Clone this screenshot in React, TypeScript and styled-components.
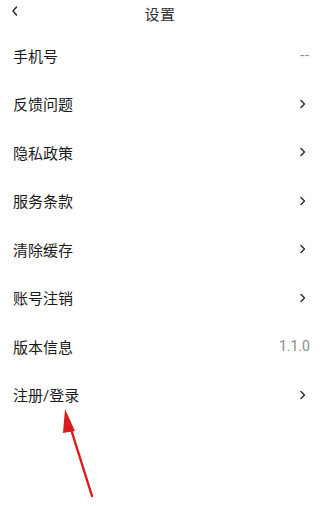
import React from 'react';
import styled, { createGlobalStyle } from 'styled-components';

const GlobalStyle = createGlobalStyle`
  html, body {
    margin: 0;
    padding: 0;
    background: #fff;
  }
  body {
    font-family: Roboto, "Noto Sans CJK SC", "Noto Sans", sans-serif;
    color: #1c1c1c;
  }
`;

const Page = styled.div`
  position: relative;
  width: 320px;
  height: 506px;
  overflow: hidden;
  background: #fff;
`;

const Header = styled.div`
  display: flex;
  align-items: center;
  justify-content: center;
  position: relative;
  height: 26px;
  margin-bottom: 5px;

  .back {
    position: absolute;
    left: 10px;
    top: 5px;
    width: 10px;
    height: 12px;
  }

  .title {
    font-size: 15px;
    color: #333;
    letter-spacing: 0.5px;
  }
`;

const List = styled.div`
  display: flex;
  flex-direction: column;
`;

const Row = styled.div`
  display: flex;
  align-items: center;
  justify-content: space-between;
  height: 48.5px;
  padding: 0 10px 0 13px;

  .label {
    font-size: 15px;
    color: #1a1a1a;
  }
`;

const Value = styled.span<{ $spaced?: boolean }>`
  font-size: 14px;
  color: #8a8a8a;
  letter-spacing: ${(p) => (p.$spaced ? '1px' : '0')};
`;

const Chevron = styled.svg`
  width: 8px;
  height: 10px;
  margin-right: 3px;
`;

const Arrow = styled.svg`
  position: absolute;
  left: 0;
  top: 0;
  width: 320px;
  height: 506px;
  pointer-events: none;
`;

type Item = { label: string; value?: string };

const items: Item[] = [
  { label: '手机号', value: '--' },
  { label: '反馈问题' },
  { label: '隐私政策' },
  { label: '服务条款' },
  { label: '清除缓存' },
  { label: '账号注销' },
  { label: '版本信息', value: '1.1.0' },
  { label: '注册/登录' },
];

const App: React.FC = () => {
  return (
    <Page>
      <GlobalStyle />
      <Header>
        <svg className="back" viewBox="0 0 10 12">
          <path d="M6.5 2 L3 6 L6.5 10" fill="none" stroke="#222" strokeWidth="1.4" strokeLinecap="round" strokeLinejoin="round" />
        </svg>
        <span className="title">设置</span>
      </Header>
      <List>
        {items.map((it) => (
          <Row key={it.label}>
            <span className="label">{it.label}</span>
            {it.value ? (
              <Value $spaced={it.value === '--'}>{it.value}</Value>
            ) : (
              <Chevron viewBox="0 0 8 10">
                <path d="M2 1.5 L5.5 5 L2 8.5" fill="none" stroke="#1e2a3a" strokeWidth="1.4" strokeLinecap="round" strokeLinejoin="round" />
              </Chevron>
            )}
          </Row>
        ))}
      </List>
      <Arrow viewBox="0 0 320 506">
        <line x1="92" y1="496" x2="70" y2="426" stroke="#d91c1c" strokeWidth="2.4" strokeLinecap="round" />
        <polygon points="65,409 75,431 63,433" fill="#d91c1c" />
      </Arrow>
    </Page>
  );
};

export default App;
